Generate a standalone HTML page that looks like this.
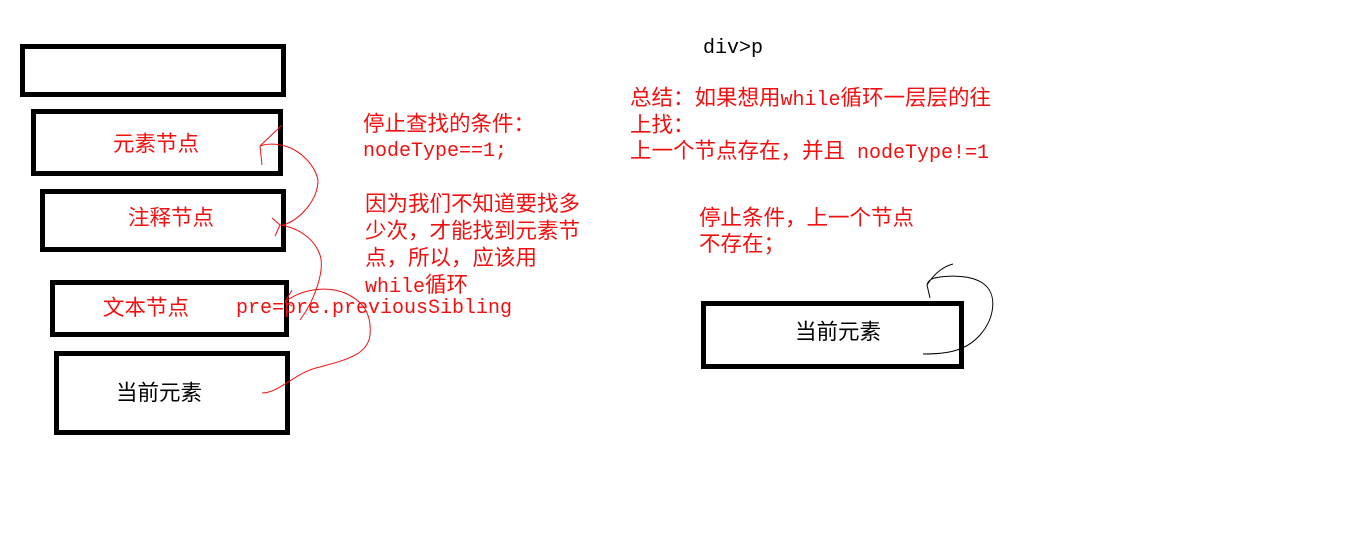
<!DOCTYPE html>
<html><head><meta charset="utf-8"><style>
body{margin:0;width:1360px;height:540px;background:#fff;position:relative;overflow:hidden;font-family:"Liberation Mono","Noto Sans CJK SC",monospace;}
.b{position:absolute;border:5px solid #000;box-sizing:border-box;}
.t{position:absolute;font-size:20px;line-height:26px;height:26px;white-space:nowrap;color:#f01010;}
.c{font-family:"Noto Sans CJK SC",sans-serif;font-size:21.5px;}
.t span{line-height:20px;}
.k{color:#000;}
</style></head><body>
<div class="b" style="left:20px;top:44px;width:266px;height:53px"></div>
<div class="b" style="left:31px;top:109px;width:252px;height:67px"></div>
<div class="b" style="left:40px;top:189px;width:246px;height:63px"></div>
<div class="b" style="left:50px;top:280px;width:239px;height:57px"></div>
<div class="b" style="left:54px;top:351px;width:236px;height:84px"></div>
<div class="b" style="left:701px;top:301px;width:263px;height:68px"></div>

<div class="t c" style="left:113px;top:130px">元素节点</div>
<div class="t c" style="left:128px;top:204px">注释节点</div>
<div class="t c" style="left:103px;top:294px">文本节点</div>
<div class="t c k" style="left:116px;top:379px">当前元素</div>
<div class="t" style="left:236px;top:296px">pre=pre.previousSibling</div>
<div class="t c" style="left:363px;top:110px">停止查找的条件：</div>
<div class="t" style="left:363px;top:139px">nodeType==1;</div>
<div class="t c" style="left:365px;top:190px">因为我们不知道要找多</div>
<div class="t c" style="left:365px;top:217px">少次，才能找到元素节</div>
<div class="t c" style="left:365px;top:244px">点，所以，应该用</div>
<div class="t" style="left:365px;top:274px">while<span class="c">循环</span></div>
<div class="t k" style="left:703px;top:36px">div&gt;p</div>
<div class="t" style="left:630px;top:87px"><span class="c">总结：如果想用</span>while<span class="c">循环一层层的往</span></div>
<div class="t c" style="left:630px;top:111px">上找：</div>
<div class="t" style="left:630px;top:140px"><span class="c">上一个节点存在，并且</span> nodeType!=1</div>
<div class="t c" style="left:699px;top:204px">停止条件，上一个节点</div>
<div class="t c" style="left:699px;top:230px">不存在；</div>
<div class="t c k" style="left:795px;top:318px">当前元素</div>

<svg width="1360" height="540" style="position:absolute;left:0;top:0" fill="none" stroke-width="1">
<path stroke="#f01010" d="M262,393 C280,393 295,372 320,367 C345,360 368,355 370,335 C372,310 360,300 345,293 C325,285 300,290 285,302"/>
<path stroke="#f01010" d="M285,302 L292,290 M285,302 L292,306"/>
<path stroke="#f01010" d="M300,320 C315,300 325,270 320,255 C315,240 300,228 280,225"/>
<path stroke="#f01010" d="M280,225 L272,218 M280,225 L275,236"/>
<path stroke="#f01010" d="M283,225 C300,220 318,200 318,180 C315,165 300,150 285,146 C275,143 265,144 260,146"/>
<path stroke="#f01010" d="M260,146 L282,125 M260,146 L262,165"/>
<path stroke="#000" d="M923,354 C945,354 965,352 980,335 C995,318 997,295 985,285 C975,276 955,275 940,277 C932,278 928,280 927,285 M927,285 L930,298 M927,285 C935,272 945,266 953,264"/>
</svg>
</body></html>
